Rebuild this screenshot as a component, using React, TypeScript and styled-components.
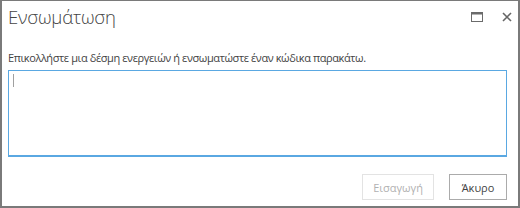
import styled, { createGlobalStyle } from 'styled-components';

const GlobalStyle = createGlobalStyle`
    html, body {
        margin: 0;
        padding: 0;
        background: #ffffff;
    }
`

const Dialog = styled.div`
    box-sizing: border-box;
    width: 520px;
    height: 208px;
    border: 1px solid #7a7a7a;
    border-left-width: 2px;
    border-right-width: 2px;
    border-bottom-width: 2px;
    background: #ffffff;
    font-family: "Open Sans", "Noto Sans", "DejaVu Sans", sans-serif;
    color: #444444;
    display: flex;
    flex-direction: column;
    padding: 0 10px 0 6px;
`

const TitleBar = styled.div`
    display: flex;
    align-items: center;
    justify-content: space-between;
    height: 31px;
`

const Title = styled.h1`
    margin: 0;
    font-size: 18.5px;
    font-weight: 300;
    color: #444444;
    letter-spacing: -0.2px;
`

const Controls = styled.div`
    display: flex;
    align-items: center;
    gap: 19px;
    margin: 1px -4px 0 0;
`

const IconButton = styled.button`
    border: none;
    background: none;
    padding: 0;
    display: flex;
    cursor: pointer;
`

const Description = styled.p`
    margin: 18px 0 0 0;
    font-size: 11px;
    color: #444444;
    letter-spacing: -0.4px;
`

const BoxWrap = styled.div`
    position: relative;
    margin-top: 5px;
    width: 499px;
    height: 87px;
`

const CodeBox = styled.textarea`
    box-sizing: border-box;
    display: block;
    width: 100%;
    height: 100%;
    border: 1px solid #5aa8e2;
    border-bottom-width: 2px;
    outline: none;
    resize: none;
    padding: 2px 4px;
    font-family: inherit;
    font-size: 12px;
`

const Caret = styled.span`
    position: absolute;
    left: 5px;
    top: 4px;
    width: 1px;
    height: 13px;
    background: #a0a0a0;
    pointer-events: none;
`

const Footer = styled.div`
    display: flex;
    justify-content: flex-end;
    gap: 15px;
    margin-top: 17px;
    padding-right: 1px;
`

const Button = styled.button<{ $disabled?: boolean }>`
    box-sizing: border-box;
    height: 26px;
    min-width: ${p => (p.$disabled ? '70px' : '58px')};
    padding: 0 10px;
    background: #ffffff;
    border: 1px solid ${p => (p.$disabled ? '#e3e3e3' : '#ababab')};
    color: ${p => (p.$disabled ? '#b1b1b1' : '#444444')};
    font-family: inherit;
    font-size: 11px;
`

function App() {
    return (
        <>
            <GlobalStyle />
            <Dialog>
                <TitleBar>
                    <Title>Ενσωμάτωση</Title>
                    <Controls>
                        <IconButton aria-label="maximize">
                            <svg width="12" height="10" viewBox="0 0 12 10">
                                <rect x="0.5" y="0.5" width="11" height="9" fill="none" stroke="#6b6b6b" />
                                <rect x="0.5" y="0.5" width="11" height="2" fill="#6b6b6b" />
                            </svg>
                        </IconButton>
                        <IconButton aria-label="close">
                            <svg width="10" height="10" viewBox="0 0 10 10">
                                <path d="M1 1 L9 9 M9 1 L1 9" stroke="#666666" strokeWidth="1.6" />
                            </svg>
                        </IconButton>
                    </Controls>
                </TitleBar>
                <Description>Επικολλήστε μια δέσμη ενεργειών ή ενσωματώστε έναν κώδικα παρακάτω.</Description>
                <BoxWrap>
                    <CodeBox />
                    <Caret />
                </BoxWrap>
                <Footer>
                    <Button $disabled disabled>Εισαγωγή</Button>
                    <Button>Άκυρο</Button>
                </Footer>
            </Dialog>
        </>
    )
}

export default App
